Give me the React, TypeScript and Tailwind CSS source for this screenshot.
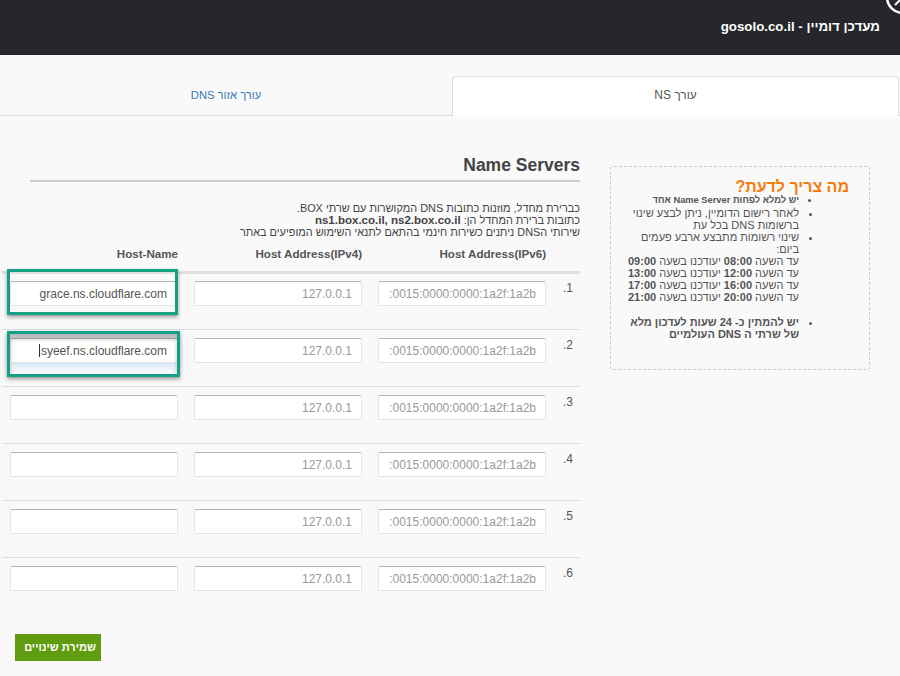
const font = { fontFamily: '"Liberation Sans", Arial, sans-serif' };

function Field({ value, grey, focused }: { value?: string; grey?: boolean; focused?: boolean }) {
  return (
    <div
      dir="ltr"
      className={`h-[25px] w-[168px] shrink-0 overflow-hidden whitespace-nowrap rounded-[2px] border border-[#e4e4e4] border-t-[#b5b5b5] bg-white text-right text-[12px] leading-[24px] ${
        grey ? "pr-[9px] text-[#999]" : "pr-[10px] text-[#555]"
      } ${focused ? "shadow-[0_2px_8px_rgba(102,175,233,0.35)]" : ""}`}
    >
      {focused && <span className="mr-[1px] inline-block h-[13px] w-px translate-y-[2px] bg-[#333]" />}
      {value}
    </div>
  );
}

function Row({ n, host, first, focused }: { n: number; host?: string; first?: boolean; focused?: boolean }) {
  return (
    <div
      className={`flex items-start gap-[16px] pl-[8px] ${
        first ? "h-[58px] border-t-[3px] border-[#e0e0e0] pt-[7px]" : "h-[57px] border-t border-[#dedede] pt-[8px]"
      }`}
    >
      <Field value={host} focused={focused} />
      <Field value="127.0.0.1" grey />
      <Field value=":0015:0000:0000:1a2f:1a2b" grey />
      <div dir="rtl" className="ml-[1px] w-[24px] pr-[8px] text-[12px] leading-[14px] text-[#555]">
        {n}.
      </div>
    </div>
  );
}

export default function App() {
  return (
    <div style={font} className="relative flex h-[676px] w-[900px] flex-col overflow-hidden bg-[#f9f9fa]">
      <header dir="rtl" className="relative flex h-[55px] shrink-0 items-center bg-[#25272a] pb-[1px] pr-[20px] text-[13.3px] font-bold text-white">
        מעדכן דומיין - gosolo.co.il
        <svg className="absolute left-[883px] top-[-23px]" width="40" height="40" viewBox="0 0 40 40" fill="none" stroke="white" strokeWidth="2.5">
          <circle cx="20" cy="20" r="16" />
          <path d="M12 12 L28 28 M12 28 L28 12" strokeWidth="2" />
        </svg>
      </header>

      <nav className="mt-[21px] flex h-[40px] shrink-0 border-b border-[#ddd]">
        <div dir="rtl" className="flex h-[39px] w-[452px] items-center justify-center text-[11.2px] text-[#337ab7]">
          עורך אזור DNS
        </div>
        <div dir="rtl" className="-mb-px flex h-[40px] w-[447px] items-center justify-center rounded-t-[4px] border border-b-0 border-[#ddd] bg-white pb-[3px] text-[12px] text-[#555]">
          עורך NS
        </div>
      </nav>

      <main className="flex items-start pt-[40px]">
        <section className="w-[580px] shrink-0">
          <div className="ml-[30px]">
            <h2 dir="rtl" className="h-[26px] border-b-2 border-[#ccc] text-[17.5px] font-bold leading-[18px] text-[#444]">
              Name Servers
            </h2>
            <div dir="rtl" className="mt-[20px] whitespace-nowrap text-[10.9px] leading-[12px] text-[#444]">
              <p>כברירת מחדל, מוזנות כתובות DNS המקושרות עם שרתי BOX.</p>
              <p>
                כתובות ברירת המחדל הן: <b className="text-[11.5px]">ns1.box.co.il, ns2.box.co.il</b>
              </p>
              <p>שירותי הDNS ניתנים כשירות חינמי בהתאם לתנאי השימוש המופיעים באתר</p>
            </div>
          </div>
          <div className="mt-[9px] flex h-[24px] gap-[16px] pl-[10px] text-right text-[11.6px] font-bold leading-[14px] text-[#555]">
            <div className="w-[168px]">Host-Name</div>
            <div className="w-[168px]">Host Address(IPv4)</div>
            <div className="w-[168px]">Host Address(IPv6)</div>
          </div>
          <div className="ml-[2px]">
            <Row n={1} host="grace.ns.cloudflare.com" first />
            <Row n={2} host="syeef.ns.cloudflare.com" focused />
            <Row n={3} />
            <Row n={4} />
            <Row n={5} />
            <Row n={6} />
          </div>
          <button dir="rtl" className="ml-[15px] mt-[20px] h-[27px] w-[86px] bg-[#5f9c10] pl-[4px] text-[11px] font-bold text-white">
            שמירת שינויים
          </button>
        </section>

        <aside dir="rtl" className="ml-[30px] mt-[10px] h-[204px] w-[260px] shrink-0 rounded-[4px] border border-dashed border-[#ccc] pr-[20px] pt-[10px] text-[11px] leading-[12px] text-[#555]">
          <h3 className="text-[16px] font-bold leading-[20px] text-[#f47c0c]">מה צריך לדעת?</h3>
          <ul className="mr-[50px] -mt-[3px] w-[170px] list-disc">
            <li className="h-[13px] whitespace-nowrap text-[9.3px] font-bold">יש למלא לפחות Name Server אחד</li>
            <li>לאחר רישום הדומיין, ניתן לבצע שינוי ברשומות DNS בכל עת</li>
            <li>
              שינוי רשומות מתבצע ארבע פעמים ביום:
              <span className="block whitespace-nowrap">עד השעה <b>08:00</b> יעודכנו בשעה <b>09:00</b></span>
              <span className="block whitespace-nowrap">עד השעה <b>12:00</b> יעודכנו בשעה <b>13:00</b></span>
              <span className="block whitespace-nowrap">עד השעה <b>16:00</b> יעודכנו בשעה <b>17:00</b></span>
              <span className="block whitespace-nowrap">עד השעה <b>20:00</b> יעודכנו בשעה <b>21:00</b></span>
              <br />
            </li>
            <li className="mt-[1px] font-bold">יש להמתין כ- 24 שעות לעדכון מלא של שרתי ה DNS העולמיים</li>
          </ul>
        </aside>
      </main>

      <div className="absolute left-[7px] top-[269px] h-[46px] w-[171px] border-[3px] border-[#15a085] shadow-[0_2px_4px_rgba(0,0,0,0.4)]" />
      <div className="absolute left-[7px] top-[331px] h-[46px] w-[173px] border-[3px] border-[#15a085] shadow-[0_2px_4px_rgba(0,0,0,0.4),inset_0_5px_4px_rgba(0,0,0,0.25)]" />
    </div>
  );
}
